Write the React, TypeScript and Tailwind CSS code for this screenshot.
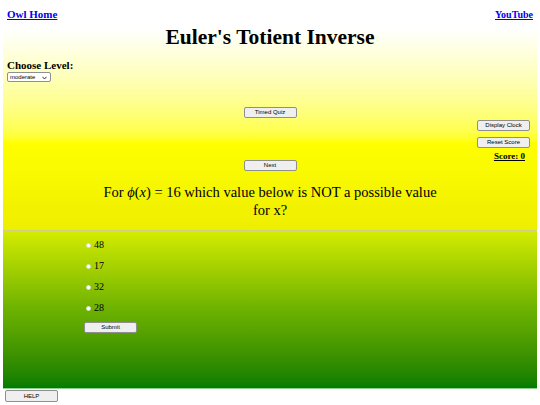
import { useState } from 'react'

const OPTIONS = ['48', '17', '32', '28']

const btn =
  "h-[11px] w-[53px] bg-[#efefef] border border-[#8f8f8f] rounded-[2px] text-[6px] leading-[9px] text-black font-['Liberation_Sans',Arial,sans-serif] flex items-center justify-center"

export default function App() {
  const [level, setLevel] = useState('moderate')
  const [picked, setPicked] = useState<string | null>(null)

  return (
    <div className="w-[540px] h-[405px] bg-white font-['Liberation_Serif','Times_New_Roman',serif] text-black overflow-hidden">
      {/* upper panel */}
      <div className="mx-[3px] h-[231px] bg-linear-to-b from-[#ffffff] from-12% via-[#ffff00] via-62% to-[#eeee00] border-b border-[#cfcf8a] flex flex-col">
        <div className="flex justify-between px-[4px] pt-[8px] text-[11px] leading-[13px] font-bold">
          <a href="#" className="text-[#0000ee] underline">Owl Home</a>
          <a href="#" className="text-[#0000ee] underline text-[10px]">YouTube</a>
        </div>
        <h1 className="text-center text-[21.5px] leading-[26px] font-bold mt-[3px]">Euler's Totient Inverse</h1>
        <div className="px-[4px] mt-[9px] text-[11px] leading-[13px] font-bold">Choose Level:</div>
        <div className="px-[4px] flex">
          <div className="relative h-[10px] w-[44px] bg-white border border-[#8f8f8f] rounded-[2px] flex items-center">
            <select
              value={level}
              onChange={(e) => setLevel(e.target.value)}
              className="appearance-none w-full h-full text-[6px] leading-[8px] bg-transparent pl-[2px] outline-none font-['Liberation_Sans',Arial,sans-serif]"
            >
              <option>easy</option>
              <option>moderate</option>
              <option>hard</option>
            </select>
            <svg className="absolute right-[3px] top-[2.5px] pointer-events-none" width="5" height="4" viewBox="0 0 5 4">
              <path d="M0.5 0.8 L2.5 3 L4.5 0.8" fill="none" stroke="#333" strokeWidth="1" />
            </svg>
          </div>
        </div>

        <div className="grid grid-cols-[1fr_auto_1fr] mt-[25px]">
          <div />
          <div className="flex flex-col">
            <button className={btn}>Timed Quiz</button>
            <button className={btn + ' mt-[42px]'}>Next</button>
          </div>
          <div className="flex flex-col items-end pr-[7px] pt-[13px]">
            <button className={btn}>Display Clock</button>
            <button className={btn + ' mt-[6px]'}>Reset Score</button>
            <div className="text-[9px] leading-[10px] font-bold underline mt-[3px] pr-[5px]">Score: 0</div>
          </div>
        </div>

        <p className="text-center text-[14.5px] leading-[18px] mt-[12px] px-[80px]">
          For <span className="italic">ϕ</span>(<span className="italic">x</span>) = 16 which value below is NOT a possible value
          <br />
          for x?
        </p>
      </div>

      {/* lower panel */}
      <div className="mx-[3px] h-[158px] bg-linear-to-b from-[#d4ec00] via-[#70b400] via-48% to-[#007c00] border-b border-[#8fd08f] pl-[83px] pt-[8px]">
        <div className="flex flex-col gap-[9px]">
          {OPTIONS.map((o) => (
            <label key={o} className="flex items-center gap-[3px] h-[12px] text-[10px] leading-[12px]">
              <span
                onClick={() => setPicked(o)}
                className={`inline-block w-[5px] h-[5px] rounded-full border border-[#dddddd] ${picked === o ? 'bg-[#0060df]' : 'bg-white'}`}
              />
              {o}
            </label>
          ))}
        </div>
        <button className={btn + ' mt-[8px] -ml-[2px]'}>Submit</button>
      </div>

      <div className="px-[5px] pt-[1px]">
        <button className={btn + ' w-[52px] h-[12px]'}>HELP</button>
      </div>
    </div>
  )
}
